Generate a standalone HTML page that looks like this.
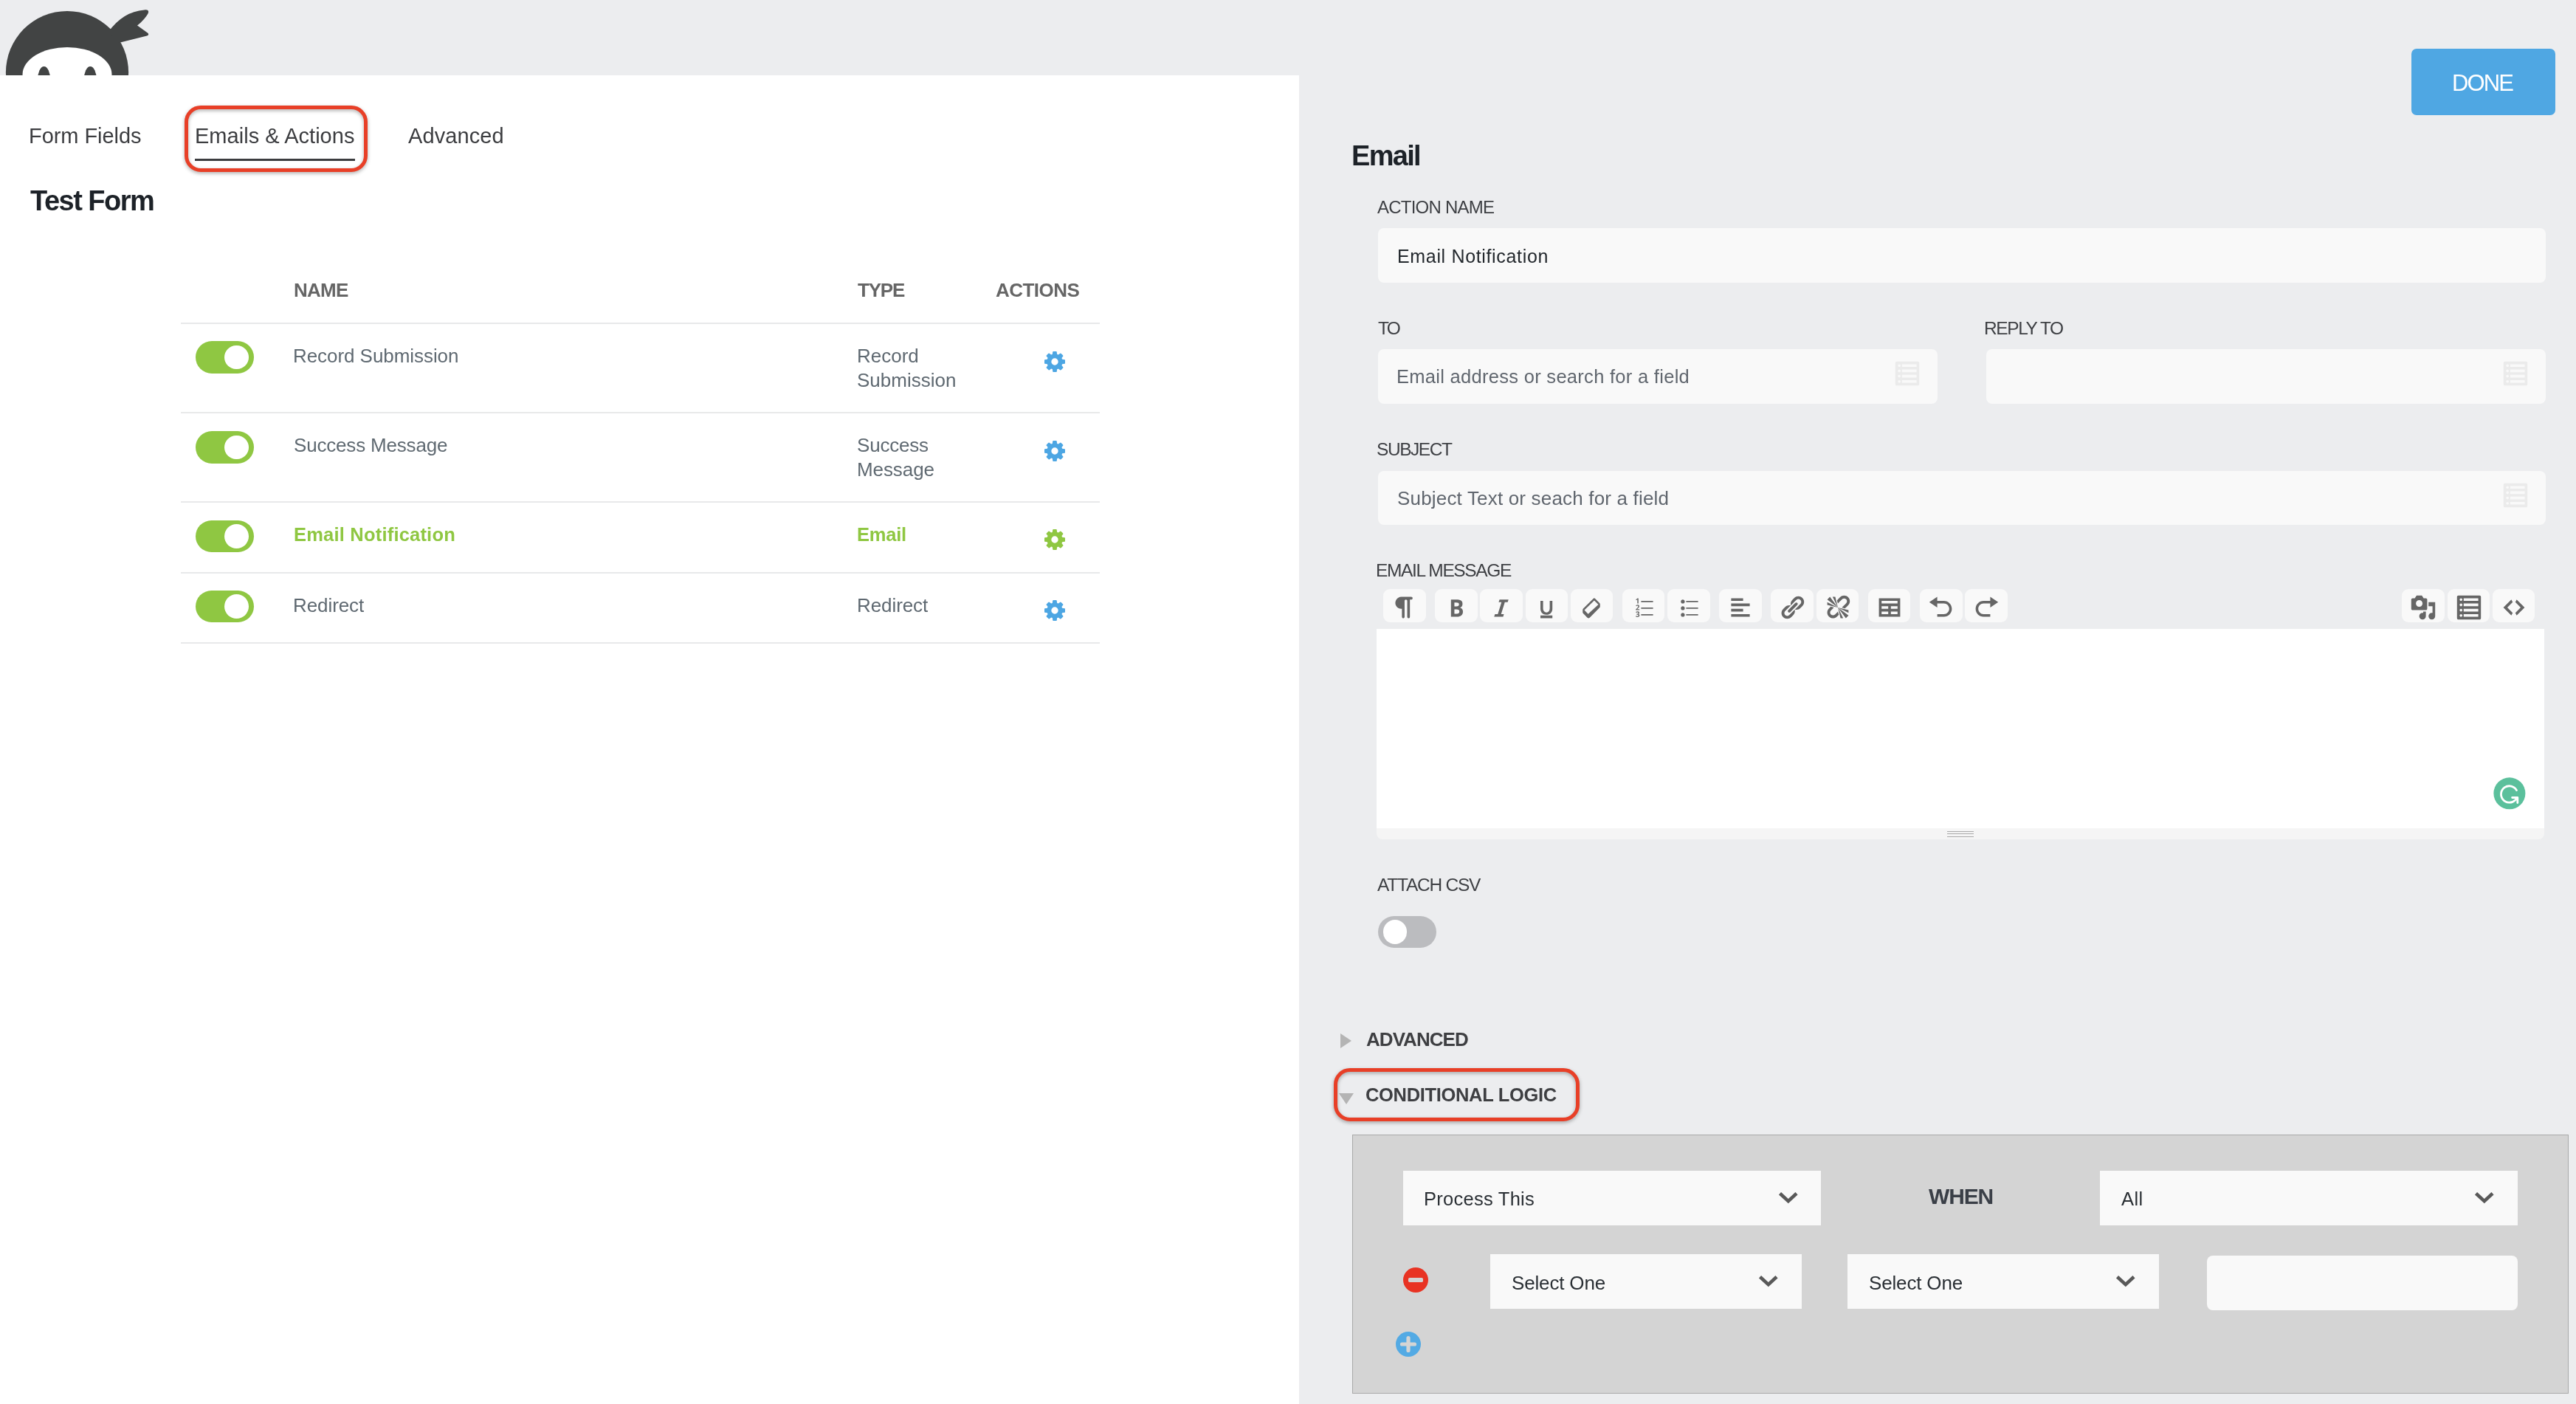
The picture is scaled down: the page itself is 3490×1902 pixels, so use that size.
<!DOCTYPE html>
<html lang="en"><head><meta charset="utf-8"><title>Ninja Forms - Emails &amp; Actions</title>
<style>
html,body{margin:0;padding:0}
body{width:3490px;height:1902px;position:relative;overflow:hidden;background:#ecedef;font-family:"Liberation Sans",Arial,sans-serif;}
.t{position:absolute;white-space:nowrap;margin:0;padding:0;will-change:transform}
.b{position:absolute;display:block}
.hl{position:absolute;box-sizing:border-box;border:5px solid #e83f27;border-radius:22px;filter:drop-shadow(0 2.5px 2.5px rgba(0,0,0,.32))}
</style></head><body>
<svg class="b" style="left:0;top:0" width="230" height="110" viewBox="0 0 230 110">
<circle cx="91" cy="98.1" r="83.1" fill="#424444"/>
<path fill="#424444" d="M147,43 Q166.7,15.6 195.5,13.4 Q203,12.8 200.6,18.2 Q196,26.5 186,34.5 L200.6,45 Q202.2,47.6 199,48.6 L161,58 Z"/>
<ellipse cx="91" cy="101" rx="60.5" ry="37" fill="#fff"/>
<ellipse cx="59.6" cy="108" rx="8.6" ry="18" fill="#424444"/>
<ellipse cx="122.3" cy="108" rx="8.6" ry="18" fill="#424444"/>
</svg>
<div class="b" style="left:0px;top:102px;width:1760px;height:1800px;background:#fff;border-radius:0px;"></div>
<div class="t" style="left:39.00px;top:170.25px;font-size:29px;line-height:29px;font-weight:400;color:#3c3d40;letter-spacing:-0.06px;">Form Fields</div>
<div class="t" style="left:263.60px;top:170.25px;font-size:29px;line-height:29px;font-weight:400;color:#3c3d40;letter-spacing:0.03px;">Emails &amp; Actions</div>
<div class="t" style="left:553.30px;top:170.25px;font-size:29px;line-height:29px;font-weight:400;color:#3c3d40;letter-spacing:0.09px;">Advanced</div>
<div class="b" style="left:264px;top:215px;width:217px;height:3px;background:#3b3c3f;border-radius:0px;"></div>
<div class="hl" style="left:250px;top:143px;width:247.7px;height:90px"></div>
<div class="t" style="left:41.00px;top:252.83px;font-size:38px;line-height:38px;font-weight:700;color:#1d2228;letter-spacing:-1.51px;">Test Form</div>
<div class="t" style="left:398.00px;top:379.99px;font-size:26px;line-height:26px;font-weight:700;color:#666;letter-spacing:-0.74px;">NAME</div>
<div class="t" style="left:1162.00px;top:379.99px;font-size:26px;line-height:26px;font-weight:700;color:#666;letter-spacing:-1.19px;">TYPE</div>
<div class="t" style="left:1349.00px;top:379.99px;font-size:26px;line-height:26px;font-weight:700;color:#666;letter-spacing:-0.53px;">ACTIONS</div>
<div class="b" style="left:245px;top:437px;width:1245px;height:2px;background:#e8e9ea;border-radius:0px;"></div>
<div class="b" style="left:245px;top:558px;width:1245px;height:2px;background:#e8e9ea;border-radius:0px;"></div>
<div class="b" style="left:245px;top:679px;width:1245px;height:2px;background:#e8e9ea;border-radius:0px;"></div>
<div class="b" style="left:245px;top:775px;width:1245px;height:2px;background:#e8e9ea;border-radius:0px;"></div>
<div class="b" style="left:245px;top:870px;width:1245px;height:2px;background:#e8e9ea;border-radius:0px;"></div>
<div class="b" style="left:265px;top:462px;width:79px;height:43.69999999999999px;background:#8fc742;border-radius:22px;"></div><div class="b" style="left:304.2px;top:467.6px;width:32.5px;height:32.5px;background:#fff;border-radius:17px;"></div>
<div class="b" style="left:265px;top:584px;width:79px;height:43.5px;background:#8fc742;border-radius:22px;"></div><div class="b" style="left:304.2px;top:589.5px;width:32.5px;height:32.5px;background:#fff;border-radius:17px;"></div>
<div class="b" style="left:265px;top:705px;width:79px;height:43px;background:#8fc742;border-radius:22px;"></div><div class="b" style="left:304.2px;top:710.25px;width:32.5px;height:32.5px;background:#fff;border-radius:17px;"></div>
<div class="b" style="left:265px;top:800px;width:79px;height:43px;background:#8fc742;border-radius:22px;"></div><div class="b" style="left:304.2px;top:805.25px;width:32.5px;height:32.5px;background:#fff;border-radius:17px;"></div>
<div class="t" style="left:397.30px;top:468.99px;font-size:26px;line-height:26px;font-weight:400;color:#5f6971;letter-spacing:-0.06px;">Record Submission</div>
<div class="t" style="left:1161.00px;top:468.99px;font-size:26px;line-height:26px;font-weight:400;color:#5f6971;">Record</div>
<div class="t" style="left:1161.00px;top:501.74px;font-size:26px;line-height:26px;font-weight:400;color:#5f6971;letter-spacing:0.01px;">Submission</div>
<div class="t" style="left:398.00px;top:589.99px;font-size:26px;line-height:26px;font-weight:400;color:#5f6971;letter-spacing:-0.18px;">Success Message</div>
<div class="t" style="left:1161.00px;top:589.99px;font-size:26px;line-height:26px;font-weight:400;color:#5f6971;letter-spacing:-0.21px;">Success</div>
<div class="t" style="left:1161.00px;top:622.74px;font-size:26px;line-height:26px;font-weight:400;color:#5f6971;letter-spacing:-0.09px;">Message</div>
<div class="t" style="left:398.00px;top:712.41px;font-size:25.5px;line-height:25.5px;font-weight:700;color:#8fc742;letter-spacing:0.2px;">Email Notification</div>
<div class="t" style="left:1161.00px;top:712.41px;font-size:25.5px;line-height:25.5px;font-weight:700;color:#8fc742;letter-spacing:-0.24px;">Email</div>
<div class="t" style="left:397.30px;top:806.99px;font-size:26px;line-height:26px;font-weight:400;color:#5f6971;letter-spacing:-0.08px;">Redirect</div>
<div class="t" style="left:1161.00px;top:806.99px;font-size:26px;line-height:26px;font-weight:400;color:#5f6971;letter-spacing:-0.08px;">Redirect</div>
<svg class="b" style="left:1415px;top:475.6px" width="28" height="28" viewBox="128 128 1536 1536"><path fill="#4da6e3" d="M1152 896q0-106-75-181t-181-75-181 75-75 181 75 181 181 75 181-75 75-181zm512-109v222q0 12-8 23t-20 13l-185 28q-19 54-39 91 35 50 107 138 10 12 10 25t-9 23q-27 37-99 108t-94 71q-12 0-26-9l-138-108q-44 23-91 38-16 136-29 186-7 28-36 28h-222q-14 0-24.5-8.500t-11.5-21.500l-28-184q-49-16-90-37l-141 107q-10 9-25 9-14 0-25-11-126-114-165-168-7-10-7-23 0-12 8-23 15-21 51-66.500t54-70.500q-27-50-41-99l-183-27q-13-2-21-12.500t-8-23.500v-222q0-12 8-23t19-13l186-28q14-46 39-92-40-57-107-138-10-12-10-24 0-10 9-23 26-36 98.500-107.500t94.500-71.500q13 0 26 10l138 107q44-23 91-38 16-136 29-186 7-28 36-28h222q14 0 24.500 8.500t11.500 21.500l28 184q49 16 90 37l142-107q9-9 24-9 13 0 25 10 129 119 165 170 7 8 7 22 0 12-8 23-15 21-51 66.500t-54 70.500q26 50 41 98l183 28q13 2 21 12.500t8 23.500z"/></svg>
<svg class="b" style="left:1415px;top:596.6px" width="28" height="28" viewBox="128 128 1536 1536"><path fill="#4da6e3" d="M1152 896q0-106-75-181t-181-75-181 75-75 181 75 181 181 75 181-75 75-181zm512-109v222q0 12-8 23t-20 13l-185 28q-19 54-39 91 35 50 107 138 10 12 10 25t-9 23q-27 37-99 108t-94 71q-12 0-26-9l-138-108q-44 23-91 38-16 136-29 186-7 28-36 28h-222q-14 0-24.5-8.500t-11.5-21.500l-28-184q-49-16-90-37l-141 107q-10 9-25 9-14 0-25-11-126-114-165-168-7-10-7-23 0-12 8-23 15-21 51-66.500t54-70.500q-27-50-41-99l-183-27q-13-2-21-12.500t-8-23.500v-222q0-12 8-23t19-13l186-28q14-46 39-92-40-57-107-138-10-12-10-24 0-10 9-23 26-36 98.500-107.500t94.500-71.500q13 0 26 10l138 107q44-23 91-38 16-136 29-186 7-28 36-28h222q14 0 24.500 8.500t11.500 21.500l28 184q49 16 90 37l142-107q9-9 24-9 13 0 25 10 129 119 165 170 7 8 7 22 0 12-8 23-15 21-51 66.500t-54 70.500q26 50 41 98l183 28q13 2 21 12.500t8 23.500z"/></svg>
<svg class="b" style="left:1415px;top:716.9px" width="28" height="28" viewBox="128 128 1536 1536"><path fill="#8fc742" d="M1152 896q0-106-75-181t-181-75-181 75-75 181 75 181 181 75 181-75 75-181zm512-109v222q0 12-8 23t-20 13l-185 28q-19 54-39 91 35 50 107 138 10 12 10 25t-9 23q-27 37-99 108t-94 71q-12 0-26-9l-138-108q-44 23-91 38-16 136-29 186-7 28-36 28h-222q-14 0-24.5-8.500t-11.5-21.500l-28-184q-49-16-90-37l-141 107q-10 9-25 9-14 0-25-11-126-114-165-168-7-10-7-23 0-12 8-23 15-21 51-66.500t54-70.500q-27-50-41-99l-183-27q-13-2-21-12.500t-8-23.500v-222q0-12 8-23t19-13l186-28q14-46 39-92-40-57-107-138-10-12-10-24 0-10 9-23 26-36 98.500-107.500t94.500-71.500q13 0 26 10l138 107q44-23 91-38 16-136 29-186 7-28 36-28h222q14 0 24.500 8.500t11.500 21.500l28 184q49 16 90 37l142-107q9-9 24-9 13 0 25 10 129 119 165 170 7 8 7 22 0 12-8 23-15 21-51 66.500t-54 70.500q26 50 41 98l183 28q13 2 21 12.500t8 23.500z"/></svg>
<svg class="b" style="left:1415px;top:812.9px" width="28" height="28" viewBox="128 128 1536 1536"><path fill="#4da6e3" d="M1152 896q0-106-75-181t-181-75-181 75-75 181 75 181 181 75 181-75 75-181zm512-109v222q0 12-8 23t-20 13l-185 28q-19 54-39 91 35 50 107 138 10 12 10 25t-9 23q-27 37-99 108t-94 71q-12 0-26-9l-138-108q-44 23-91 38-16 136-29 186-7 28-36 28h-222q-14 0-24.5-8.500t-11.5-21.500l-28-184q-49-16-90-37l-141 107q-10 9-25 9-14 0-25-11-126-114-165-168-7-10-7-23 0-12 8-23 15-21 51-66.500t54-70.500q-27-50-41-99l-183-27q-13-2-21-12.500t-8-23.500v-222q0-12 8-23t19-13l186-28q14-46 39-92-40-57-107-138-10-12-10-24 0-10 9-23 26-36 98.500-107.500t94.500-71.500q13 0 26 10l138 107q44-23 91-38 16-136 29-186 7-28 36-28h222q14 0 24.500 8.500t11.500 21.500l28 184q49 16 90 37l142-107q9-9 24-9 13 0 25 10 129 119 165 170 7 8 7 22 0 12-8 23-15 21-51 66.500t-54 70.500q26 50 41 98l183 28q13 2 21 12.500t8 23.500z"/></svg>
<div class="b" style="left:3267px;top:66px;width:195px;height:90px;background:#4fa7e3;border-radius:7px;"></div>
<div class="t" style="left:3322.00px;top:96.56px;font-size:31px;line-height:31px;font-weight:400;color:#fff;letter-spacing:-1.9px;">DONE</div>
<div class="t" style="left:1831.00px;top:191.58px;font-size:38px;line-height:38px;font-weight:700;color:#1d2228;letter-spacing:-1.71px;">Email</div>
<div class="t" style="left:1866.00px;top:268.68px;font-size:24px;line-height:24px;font-weight:400;color:#3d3f43;letter-spacing:-0.77px;">ACTION NAME</div>
<div class="b" style="left:1867px;top:309px;width:1582px;height:74px;background:#f9f9f9;border-radius:8px;"></div>
<div class="t" style="left:1892.50px;top:334.84px;font-size:25px;line-height:25px;font-weight:400;color:#23282d;letter-spacing:0.66px;">Email Notification</div>
<div class="t" style="left:1866.50px;top:433.26px;font-size:24.5px;line-height:24.5px;font-weight:400;color:#3d3f43;letter-spacing:-2.8px;">TO</div>
<div class="b" style="left:1867px;top:473px;width:758px;height:74px;background:#f9f9f9;border-radius:8px;"></div>
<div class="t" style="left:1892.20px;top:498.41px;font-size:25.5px;line-height:25.5px;font-weight:400;color:#60666e;letter-spacing:0.29px;">Email address or search for a field</div>
<div class="t" style="left:2688.40px;top:433.26px;font-size:24.5px;line-height:24.5px;font-weight:400;color:#3d3f43;letter-spacing:-1.41px;">REPLY TO</div>
<div class="b" style="left:2691px;top:473px;width:758px;height:74px;background:#f9f9f9;border-radius:8px;"></div>
<div class="t" style="left:1865.00px;top:597.26px;font-size:24.5px;line-height:24.5px;font-weight:400;color:#3d3f43;letter-spacing:-1.44px;">SUBJECT</div>
<div class="b" style="left:1867px;top:638px;width:1582px;height:73px;background:#f9f9f9;border-radius:8px;"></div>
<div class="t" style="left:1893.00px;top:661.74px;font-size:26px;line-height:26px;font-weight:400;color:#60666e;letter-spacing:0.18px;">Subject Text or seach for a field</div>
<svg class="b" style="left:2565.5px;top:488px" width="36" height="36" viewBox="0 0 20 20"><path fill="#ebebeb" d="M2 19h16c.55 0 1-.45 1-1V2c0-.55-.45-1-1-1H2c-.55 0-1 .45-1 1v16c0 .55.45 1 1 1zM4 3c.55 0 1 .45 1 1s-.45 1-1 1-1-.45-1-1 .45-1 1-1zm13 0v2H6V3h11zM4 7c.55 0 1 .45 1 1s-.45 1-1 1-1-.45-1-1 .45-1 1-1zm13 0v2H6V7h11zM4 11c.55 0 1 .45 1 1s-.45 1-1 1-1-.45-1-1 .45-1 1-1zm13 0v2H6v-2h11zM4 15c.55 0 1 .45 1 1s-.45 1-1 1-1-.45-1-1 .45-1 1-1zm13 0v2H6v-2h11z"/></svg>
<svg class="b" style="left:3389.5px;top:488px" width="36" height="36" viewBox="0 0 20 20"><path fill="#ebebeb" d="M2 19h16c.55 0 1-.45 1-1V2c0-.55-.45-1-1-1H2c-.55 0-1 .45-1 1v16c0 .55.45 1 1 1zM4 3c.55 0 1 .45 1 1s-.45 1-1 1-1-.45-1-1 .45-1 1-1zm13 0v2H6V3h11zM4 7c.55 0 1 .45 1 1s-.45 1-1 1-1-.45-1-1 .45-1 1-1zm13 0v2H6V7h11zM4 11c.55 0 1 .45 1 1s-.45 1-1 1-1-.45-1-1 .45-1 1-1zm13 0v2H6v-2h11zM4 15c.55 0 1 .45 1 1s-.45 1-1 1-1-.45-1-1 .45-1 1-1zm13 0v2H6v-2h11z"/></svg>
<svg class="b" style="left:3389.5px;top:652.5px" width="36" height="36" viewBox="0 0 20 20"><path fill="#ebebeb" d="M2 19h16c.55 0 1-.45 1-1V2c0-.55-.45-1-1-1H2c-.55 0-1 .45-1 1v16c0 .55.45 1 1 1zM4 3c.55 0 1 .45 1 1s-.45 1-1 1-1-.45-1-1 .45-1 1-1zm13 0v2H6V3h11zM4 7c.55 0 1 .45 1 1s-.45 1-1 1-1-.45-1-1 .45-1 1-1zm13 0v2H6V7h11zM4 11c.55 0 1 .45 1 1s-.45 1-1 1-1-.45-1-1 .45-1 1-1zm13 0v2H6v-2h11zM4 15c.55 0 1 .45 1 1s-.45 1-1 1-1-.45-1-1 .45-1 1-1zm13 0v2H6v-2h11z"/></svg>
<div class="t" style="left:1864.40px;top:761.26px;font-size:24.5px;line-height:24.5px;font-weight:400;color:#3d3f43;letter-spacing:-1.35px;">EMAIL MESSAGE</div>
<div class="b" style="left:1874px;top:798px;width:58px;height:45px;background:#f9f9f9;border-radius:9px;"></div>
<svg class="b" style="left:1885.0px;top:805px" width="36" height="36" viewBox="0 0 20 20"><path fill="#666" d="M15 2H7.54c-.83 0-1.59.2-2.28.6-.7.41-1.25.96-1.65 1.65C3.2 4.94 3 5.7 3 6.52s.2 1.58.61 2.27c.4.69.95 1.24 1.65 1.64.69.41 1.45.61 2.28.61h.43V17c0 .27.1.51.29.71.2.19.44.29.71.29.28 0 .51-.1.71-.29.2-.2.3-.44.3-.71V5c0-.27.09-.51.29-.71.2-.19.44-.29.71-.29s.51.1.71.29c.19.2.29.44.29.71v12c0 .27.1.51.3.71.2.19.43.29.71.29.27 0 .51-.1.71-.29.19-.2.29-.44.29-.71V4H15c.27 0 .5-.1.7-.3.2-.19.3-.43.3-.7s-.1-.51-.3-.71C15.5 2.1 15.27 2 15 2z"/></svg>
<div class="b" style="left:1944px;top:798px;width:58px;height:45px;background:#f9f9f9;border-radius:9px;"></div>
<svg class="b" style="left:1955.0px;top:805px" width="36" height="36" viewBox="0 0 20 20"><path fill="#666" d="M6 4v13h4.54c1.37 0 2.46-.33 3.26-1 .8-.66 1.2-1.58 1.2-2.77 0-.84-.17-1.51-.51-2.01s-.9-.85-1.67-1.03v-.09c.57-.1 1.02-.4 1.36-.9s.51-1.13.51-1.91c0-1.14-.39-1.98-1.17-2.5C12.75 4.26 11.5 4 9.78 4H6zm2.57 5.15V6.26h1.36c.73 0 1.27.11 1.61.32.34.22.51.58.51 1.07 0 .54-.16.92-.47 1.15s-.82.35-1.51.35h-1.5zm0 2.19h1.6c1.44 0 2.16.53 2.16 1.61 0 .6-.17 1.05-.51 1.34s-.86.43-1.57.43H8.57v-3.38z"/></svg>
<div class="b" style="left:2005px;top:798px;width:58px;height:45px;background:#f9f9f9;border-radius:9px;"></div>
<svg class="b" style="left:2016.0px;top:805px" width="36" height="36" viewBox="0 0 20 20"><path fill="#666" d="M14.78 6h-2.13l-2.8 9h2.12l-.62 2H4.6l.62-2h2.14l2.8-9H8.03l.62-2h6.75z"/></svg>
<div class="b" style="left:2067px;top:798px;width:57px;height:45px;background:#f9f9f9;border-radius:9px;"></div>
<svg class="b" style="left:2077.5px;top:805px" width="36" height="36" viewBox="0 0 20 20"><path fill="#666" d="M14 5h-2v5.71c0 1.99-1.12 2.98-2.45 2.98-1.32 0-2.55-1-2.55-2.96V5H5v5.87c0 1.91 1 4.54 4.48 4.54 3.49 0 4.52-2.58 4.52-4.5V5zm0 13v-2H5v2h9z"/></svg>
<div class="b" style="left:2128px;top:798px;width:57px;height:45px;background:#f9f9f9;border-radius:9px;"></div>
<svg class="b" style="left:2138.5px;top:805px" width="36" height="36" viewBox="0 0 20 20"><path fill="#666" d="M10.9 3.3Q11.6 2.6 12.3 3.3L15.6 6.6Q16 7 16 7.6L16 9.2Q16 9.8 15.6 10.2L8.2 17.6Q7.3 18.4 6.4 17.6L3.3 14.5Q2.9 14.1 2.9 13.5L2.9 11.9Q2.9 11.3 3.3 10.9ZM11.6 4.7L4.2 12L7 14.8L14.7 7.8Z"/></svg>
<div class="b" style="left:2198px;top:798px;width:57px;height:45px;background:#f9f9f9;border-radius:9px;"></div>
<svg class="b" style="left:2208.5px;top:805px" width="36" height="36" viewBox="0 0 20 20"><path fill="#666" d="M6 7V3h-.69L4.02 4.03l.4.51.46-.37c.06-.05.16-.14.3-.28l-.02.42V7H6zm2-2h9v1H8V5zm-1.23 6.95v-.7H5.05v-.04l.51-.48c.33-.31.57-.54.7-.71.14-.17.24-.33.3-.49.07-.16.1-.33.1-.51 0-.21-.05-.4-.16-.56-.1-.16-.25-.28-.44-.37s-.41-.14-.65-.14c-.19 0-.36.02-.51.06-.15.03-.29.09-.42.15-.12.07-.29.19-.48.35l.45.54c.16-.13.31-.23.45-.3.15-.07.3-.1.45-.1.14 0 .26.03.35.11s.13.2.13.36c0 .1-.02.2-.06.3s-.1.21-.19.33c-.09.11-.29.32-.58.62l-.99 1v.58h2.76zM8 10h9v1H8v-1zm-1.29 3.95c0-.3-.12-.54-.37-.71-.24-.17-.58-.26-1-.26-.52 0-.96.13-1.33.4l.4.6c.17-.11.32-.19.46-.23.14-.05.27-.07.41-.07.38 0 .58.15.58.46 0 .2-.07.35-.22.43s-.38.12-.7.12h-.31v.66h.31c.34 0 .59.04.75.12.15.08.23.22.23.41 0 .22-.07.37-.2.47-.14.1-.35.15-.63.15-.19 0-.38-.03-.57-.08s-.36-.12-.52-.2v.74c.34.15.74.22 1.18.22.53 0 .94-.11 1.22-.33.29-.22.43-.52.43-.92 0-.27-.09-.5-.26-.68-.18-.18-.43-.29-.75-.33v-.02c.28-.06.49-.17.65-.34.16-.16.24-.37.24-.61zM8 15h9v1H8v-1z"/></svg>
<div class="b" style="left:2259px;top:798px;width:58px;height:45px;background:#f9f9f9;border-radius:9px;"></div>
<svg class="b" style="left:2270.0px;top:805px" width="36" height="36" viewBox="0 0 20 20"><path fill="#666" d="M5.5 7C4.67 7 4 6.33 4 5.5 4 4.68 4.67 4 5.5 4 6.32 4 7 4.68 7 5.5 7 6.33 6.32 7 5.5 7zM8 5h9v1H8V5zm-2.5 7c-.83 0-1.5-.67-1.5-1.5C4 9.68 4.67 9 5.5 9c.82 0 1.5.68 1.5 1.5 0 .83-.68 1.5-1.5 1.5zM8 10h9v1H8v-1zm-2.5 7c-.83 0-1.5-.67-1.5-1.5 0-.82.67-1.5 1.5-1.5.82 0 1.5.68 1.5 1.5 0 .83-.68 1.5-1.5 1.5zM8 15h9v1H8v-1z"/></svg>
<div class="b" style="left:2329px;top:798px;width:58px;height:45px;background:#f9f9f9;border-radius:9px;"></div>
<svg class="b" style="left:2340.0px;top:805px" width="36" height="36" viewBox="0 0 20 20"><path fill="#666" d="M12 5V3H3v2h9zm5 4V7H3v2h14zm-5 4v-2H3v2h9zm5 4v-2H3v2h14z"/></svg>
<div class="b" style="left:2399px;top:798px;width:58px;height:45px;background:#f9f9f9;border-radius:9px;"></div>
<svg class="b" style="left:2410.0px;top:805px" width="36" height="36" viewBox="0 0 20 20"><path fill="#666" d="M17.74 2.76c1.68 1.69 1.68 4.41 0 6.1l-1.53 1.52c-1.12 1.12-2.7 1.47-4.14 1.09l2.62-2.61.76-.77.76-.76c.84-.84.84-2.2 0-3.04-.84-.85-2.2-.85-3.04 0l-.77.76-3.38 3.38c-.37-1.44-.02-3.02 1.1-4.14l1.52-1.53c1.69-1.68 4.42-1.68 6.1 0zM8.59 13.43l5.34-5.34c.42-.42.42-1.1 0-1.52-.44-.43-1.13-.39-1.53 0l-5.33 5.34c-.42.42-.42 1.1 0 1.52.44.43 1.13.39 1.52 0zm-.76 2.29l4.14-4.15c.38 1.44.03 3.02-1.09 4.14l-1.52 1.53c-1.69 1.68-4.41 1.68-6.1 0-1.68-1.68-1.68-4.42 0-6.1l1.53-1.52c1.12-1.12 2.7-1.47 4.14-1.1l-4.14 4.15c-.85.84-.85 2.2 0 3.05.84.84 2.2.84 3.04 0z"/></svg>
<div class="b" style="left:2461px;top:798px;width:57px;height:45px;background:#f9f9f9;border-radius:9px;"></div>
<svg class="b" style="left:2471.5px;top:805px" width="36" height="36" viewBox="0 0 20 20"><path fill="#666" d="M17.74 2.26c1.68 1.69 1.68 4.41 0 6.1l-1.53 1.52c-.32.33-.69.58-1.08.77L13 10l1.69-1.64.76-.77.76-.76c.84-.84.84-2.2 0-3.04-.84-.85-2.2-.85-3.04 0l-.77.76-.76.76L10 7l-.65-2.14c.19-.38.44-.75.77-1.07l1.52-1.53c1.69-1.68 4.42-1.68 6.1 0zM2 4l8 6-6-8zm4-2l4 8-2-8H6zM2 6l8 4-8-2V6zm7.36 7.69L10 13l.74 2.35-1.38 1.39c-1.69 1.68-4.41 1.68-6.1 0-1.68-1.68-1.68-4.42 0-6.1l1.39-1.38L7 10l-.69.64-1.52 1.53c-.85.84-.85 2.2 0 3.04.84.85 2.2.85 3.04 0zM18 16l-8-6 6 8zm-4 2l-4-8 2 8h2zm4-4l-8-4 8 2v2z"/></svg>
<div class="b" style="left:2531px;top:798px;width:57px;height:45px;background:#f9f9f9;border-radius:9px;"></div>
<svg class="b" style="left:2541.5px;top:805px" width="36" height="36" viewBox="0 0 20 20"><path fill="#666" d="M18 17V3H2v14h16zM16 7H4V5h12v2zm-7 4H4V9h5v2zm7 0h-5V9h5v2zm-7 4H4v-2h5v2zm7 0h-5v-2h5v2z"/></svg>
<div class="b" style="left:2601px;top:798px;width:58px;height:45px;background:#f9f9f9;border-radius:9px;"></div>
<svg class="b" style="left:2612.0px;top:805px" width="36" height="36" viewBox="0 0 20 20"><path fill="#666" d="M12 5H7V2L1 6l6 4V7h5c2.2 0 4 1.8 4 4s-1.8 4-4 4H7v2h5c3.3 0 6-2.7 6-6s-2.7-6-6-6z"/></svg>
<div class="b" style="left:2662px;top:798px;width:58px;height:45px;background:#f9f9f9;border-radius:9px;"></div>
<svg class="b" style="left:2673.0px;top:805px" width="36" height="36" viewBox="0 0 20 20"><path fill="#666" d="M8 5h5V2l6 4-6 4V7H8c-2.2 0-4 1.8-4 4s1.8 4 4 4h5v2H8c-3.3 0-6-2.7-6-6s2.7-6 6-6z"/></svg>
<div class="b" style="left:3254px;top:798px;width:58px;height:45px;background:#f9f9f9;border-radius:9px;"></div>
<svg class="b" style="left:3265.0px;top:805px" width="36" height="36" viewBox="0 0 20 20"><path fill="#666" d="M13 11V4c0-.55-.45-1-1-1h-1.67L9 1H5L3.67 3H2c-.55 0-1 .45-1 1v7c0 .55.45 1 1 1h10c.55 0 1-.45 1-1zM7 4.5c1.38 0 2.5 1.12 2.5 2.5S8.380 9.5 7 9.5 4.5 8.38 4.5 7 5.62 4.5 7 4.5zM14 6h5v10.5c0 1.38-1.12 2.5-2.5 2.5S14 17.88 14 16.5s1.12-2.5 2.5-2.5c.17 0 .34.02.5.05V9h-3V6zm-4 8.050V13h2v3.500c0 1.380-1.120 2.500-2.500 2.500S7 17.880 7 16.500 8.120 14 9.500 14c.170 0 .340.020.500.050z"/></svg>
<div class="b" style="left:3316px;top:798px;width:57px;height:45px;background:#f9f9f9;border-radius:9px;"></div>
<svg class="b" style="left:3326.5px;top:805px" width="36" height="36" viewBox="0 0 20 20"><path fill="#666" d="M2 19h16c.55 0 1-.45 1-1V2c0-.55-.45-1-1-1H2c-.55 0-1 .45-1 1v16c0 .55.45 1 1 1zM4 3c.55 0 1 .45 1 1s-.45 1-1 1-1-.45-1-1 .45-1 1-1zm13 0v2H6V3h11zM4 7c.55 0 1 .45 1 1s-.45 1-1 1-1-.45-1-1 .45-1 1-1zm13 0v2H6V7h11zM4 11c.55 0 1 .45 1 1s-.45 1-1 1-1-.45-1-1 .45-1 1-1zm13 0v2H6v-2h11zM4 15c.55 0 1 .45 1 1s-.45 1-1 1-1-.45-1-1 .45-1 1-1zm13 0v2H6v-2h11z"/></svg>
<div class="b" style="left:3377px;top:798px;width:57px;height:45px;background:#f9f9f9;border-radius:9px;"></div>
<svg class="b" style="left:3387.5px;top:805px" width="36" height="36" viewBox="0 0 20 20"><path fill="#666" d="M9 6l-4 4 4 4-1 2-6-6 6-6zm2 8l4-4-4-4 1-2 6 6-6 6z"/></svg>
<div class="b" style="left:1865px;top:852px;width:1582px;height:270px;background:#fff;border-radius:0px;"></div>
<div class="b" style="left:1865px;top:1122px;width:1582px;height:15px;background:#f5f5f5;border-radius:0px;border-radius:0 0 8px 8px;"></div>
<div class="b" style="left:2638px;top:1126px;width:36px;height:1px;background:#aaa;border-radius:0px;"></div>
<div class="b" style="left:2638px;top:1129px;width:36px;height:1px;background:#aaa;border-radius:0px;"></div>
<div class="b" style="left:2638px;top:1133px;width:36px;height:1px;background:#aaa;border-radius:0px;"></div>
<svg class="b" style="left:3378px;top:1053.4px" width="44" height="44" viewBox="0 0 44 44"><circle cx="21.9" cy="21.8" r="21.5" fill="#5bc09c"/><path d="M31.5 17.6A11.2 11.2 0 1 0 29.6 30.9L32.8 27.5M25.6 27.5H32.8V34.5" fill="none" stroke="#fff" stroke-width="2.8" stroke-linecap="round" stroke-linejoin="round"/></svg>
<div class="t" style="left:1866.00px;top:1187.26px;font-size:24.5px;line-height:24.5px;font-weight:400;color:#3d3f43;letter-spacing:-1.24px;">ATTACH CSV</div>
<div class="b" style="left:1867px;top:1241px;width:79px;height:43px;background:#bbbcbf;border-radius:22px;"></div><div class="b" style="left:1873.6px;top:1246.25px;width:32.5px;height:32.5px;background:#fff;border-radius:17px;"></div>
<svg class="b" style="left:1815px;top:1399px" width="17" height="22" viewBox="0 0 17 22"><path d="M1 1 L16 11 L1 21Z" fill="#b4b4b4"/></svg>
<div class="t" style="left:1850.75px;top:1394.99px;font-size:26px;line-height:26px;font-weight:700;color:#3e3f42;letter-spacing:-0.95px;">ADVANCED</div>
<svg class="b" style="left:1813px;top:1480px" width="22" height="17" viewBox="0 0 22 17"><path d="M1 1 L21 1 L11 16Z" fill="#b4b4b4"/></svg>
<div class="t" style="left:1849.80px;top:1471.41px;font-size:25.5px;line-height:25.5px;font-weight:700;color:#3e3f42;letter-spacing:-0.33px;">CONDITIONAL LOGIC</div>
<div class="hl" style="left:1807.2px;top:1447.3px;width:332.6px;height:71.5px"></div>
<div class="b" style="left:1832px;top:1537px;width:1648px;height:351px;background:#d4d4d4;border-radius:0px;box-sizing:border-box;border:1px solid #a9a9a9;"></div>
<div class="b" style="left:1901px;top:1586px;width:566px;height:74px;background:#f9f9f9;border-radius:0px;"></div>
<div class="t" style="left:1928.80px;top:1612.41px;font-size:25.5px;line-height:25.5px;font-weight:400;color:#2a2f34;letter-spacing:0.26px;">Process This</div>
<svg class="b" style="left:2407.5px;top:1612.5px" width="30" height="19" viewBox="-2 -2 30 19"><path d="M1.5 1.8 L12.8 12.2 L24 1.8" fill="none" stroke="#595959" stroke-width="4.6"/></svg>
<div class="t" style="left:2612.60px;top:1605.61px;font-size:30px;line-height:30px;font-weight:700;color:#3a3f47;letter-spacing:-1.16px;">WHEN</div>
<div class="b" style="left:2845px;top:1586px;width:566px;height:74px;background:#f9f9f9;border-radius:0px;"></div>
<div class="t" style="left:2874.00px;top:1612.41px;font-size:25.5px;line-height:25.5px;font-weight:400;color:#2a2f34;letter-spacing:0.41px;">All</div>
<svg class="b" style="left:3351px;top:1612.5px" width="30" height="19" viewBox="-2 -2 30 19"><path d="M1.5 1.8 L12.8 12.2 L24 1.8" fill="none" stroke="#595959" stroke-width="4.6"/></svg>
<div class="b" style="left:2019px;top:1699px;width:422px;height:74px;background:#f9f9f9;border-radius:0px;"></div>
<div class="t" style="left:2047.80px;top:1724.74px;font-size:26px;line-height:26px;font-weight:400;color:#2a2f34;letter-spacing:-0.16px;">Select One</div>
<svg class="b" style="left:2381px;top:1726px" width="30" height="19" viewBox="-2 -2 30 19"><path d="M1.5 1.8 L12.8 12.2 L24 1.8" fill="none" stroke="#595959" stroke-width="4.6"/></svg>
<div class="b" style="left:2503px;top:1699px;width:422px;height:74px;background:#f9f9f9;border-radius:0px;"></div>
<div class="t" style="left:2532.00px;top:1724.74px;font-size:26px;line-height:26px;font-weight:400;color:#2a2f34;letter-spacing:-0.16px;">Select One</div>
<svg class="b" style="left:2865px;top:1726px" width="30" height="19" viewBox="-2 -2 30 19"><path d="M1.5 1.8 L12.8 12.2 L24 1.8" fill="none" stroke="#595959" stroke-width="4.6"/></svg>
<div class="b" style="left:2990px;top:1701px;width:421px;height:74px;background:#f9f9f9;border-radius:8px;"></div>
<svg class="b" style="left:1901px;top:1717px" width="34" height="34" viewBox="0 0 34 34"><circle cx="17" cy="17" r="17" fill="#e83323"/><rect x="7" y="13.9" width="20" height="6.2" rx="1.8" fill="#d4d4d4"/></svg>
<svg class="b" style="left:1890.8px;top:1803.8px" width="34" height="34" viewBox="0 0 34 34"><circle cx="17" cy="17" r="17" fill="#53aae4"/><path d="M17 8.5v17M8.500 17h17" stroke="#d4d4d4" stroke-width="5.2" stroke-linecap="round" fill="none"/></svg>
</body></html>
